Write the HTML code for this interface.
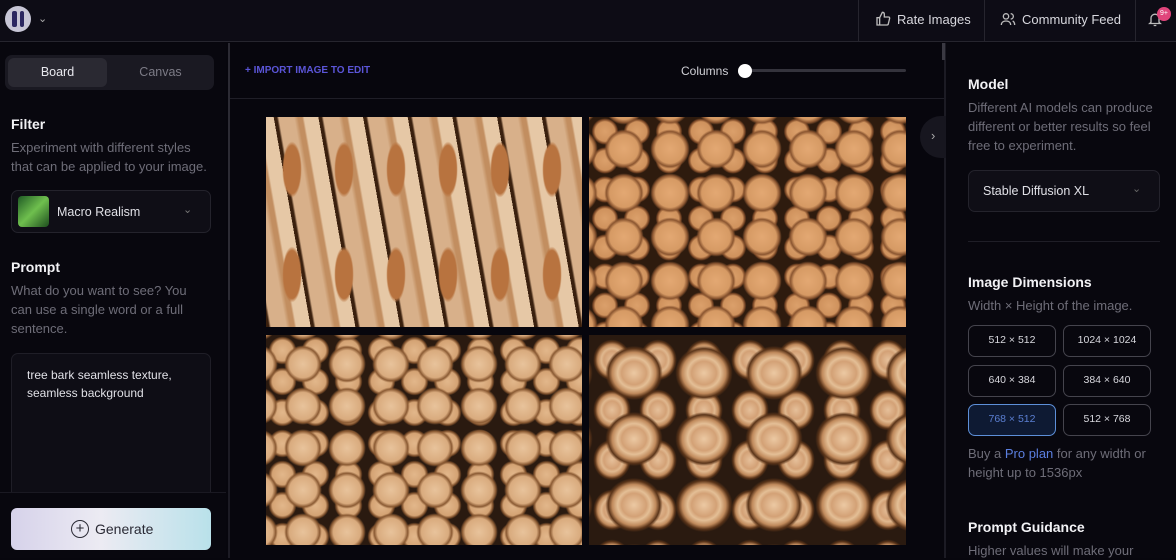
<!DOCTYPE html>
<html><head><style>
*{box-sizing:border-box;margin:0;padding:0}
body{width:1176px;height:558px;overflow:hidden;background:#07060d;font-family:"Liberation Sans",sans-serif;color:#e8e8ee;position:relative}
.abs{position:absolute}
.hdr{left:0;top:0;width:1176px;height:42px;background:#0d0c15;border-bottom:1px solid #26252e}
.sub{color:#6e6d78;font-size:13px;line-height:19px}
h3{font-size:14px;font-weight:bold;color:#f2f2f5}
.btn{border:1.5px solid #45444d;border-radius:7px;width:88px;height:32px;font-size:10.5px;text-align:center;line-height:29px;color:#d8d8de;position:absolute}
</style></head><body>
<div class="abs hdr"></div>
<div class="abs" style="left:5px;top:6px;width:26px;height:26px;border-radius:50%;background:#c7c6d6"></div>
<div class="abs" style="left:12px;top:11px;width:5px;height:16px;background:#2b2760;border-radius:2px"></div>
<div class="abs" style="left:20px;top:11px;width:4px;height:16px;background:#2b2760;border-radius:2px"></div>
<div class="abs" style="left:38px;top:12px;font-size:11px;color:#aaa">⌄</div>
<div class="abs" style="left:858px;top:0;width:1px;height:42px;background:#26252e"></div>
<div class="abs" style="left:984px;top:0;width:1px;height:42px;background:#26252e"></div>
<div class="abs" style="left:1135px;top:0;width:1px;height:42px;background:#26252e"></div>
<svg class="abs" style="left:875px;top:11px" width="16" height="16" viewBox="0 0 24 24" fill="none" stroke="#bbb" stroke-width="2"><path d="M7 10v11H3V10zM7 10l4-8c2 0 3 1 3 3v4h6a2 2 0 0 1 2 2l-2 8a2 2 0 0 1-2 2H7"/></svg>
<div class="abs" style="left:897px;top:12px;font-size:13px;color:#d8d8de">Rate Images</div>
<svg class="abs" style="left:1000px;top:11px" width="16" height="16" viewBox="0 0 24 24" fill="none" stroke="#bbb" stroke-width="2"><circle cx="9" cy="8" r="4"/><path d="M2 21c0-4 3-6 7-6s7 2 7 6M16 4a4 4 0 0 1 0 8M19 15c2 1 3 3 3 6"/></svg>
<div class="abs" style="left:1022px;top:12px;font-size:13px;color:#d8d8de">Community Feed</div>
<svg class="abs" style="left:1147px;top:11px" width="16" height="17" viewBox="0 0 24 24" fill="none" stroke="#bbb" stroke-width="2"><path d="M6 16V10a6 6 0 0 1 12 0v6l2 2H4zM10 21h4"/></svg>
<div class="abs" style="left:1157px;top:7px;width:14px;height:14px;border-radius:50%;background:#e0457b;font-size:7px;line-height:14px;text-align:center;color:#fff">9+</div>

<!-- left panel -->
<div class="abs" style="left:0;top:43px;width:226px;height:515px;background:#08070e"></div>
<div class="abs" style="left:228px;top:43px;width:2px;height:515px;background:#1c1b24"></div>
<div class="abs" style="left:228px;top:43px;width:2px;height:257px;background:#2c2b34"></div>
<div class="abs" style="left:5px;top:55px;width:209px;height:35px;background:#1a1922;border-radius:7px"></div>
<div class="abs" style="left:8px;top:58px;width:99px;height:29px;background:#2a2932;border-radius:6px;text-align:center;line-height:29px;font-size:12.5px;color:#e8e8ee">Board</div>
<div class="abs" style="left:110px;top:58px;width:101px;height:29px;text-align:center;line-height:29px;font-size:12.5px;color:#7c7b86">Canvas</div>
<h3 class="abs" style="left:11px;top:116px">Filter</h3>
<div class="abs sub" style="left:11px;top:138px;width:200px">Experiment with different styles that can be applied to your image.</div>
<div class="abs" style="left:11px;top:190px;width:200px;height:43px;border:1px solid #24232c;border-radius:7px;background:#0f0e16"></div>
<div class="abs" style="left:18px;top:196px;width:31px;height:31px;border-radius:4px;background:linear-gradient(135deg,#1f5a25,#6fbf4e 50%,#1d4d1e)"></div>
<div class="abs" style="left:57px;top:205px;font-size:12.5px;color:#e0e0e6">Macro Realism</div>
<div class="abs" style="left:183px;top:203px;font-size:11px;color:#777">⌄</div>
<h3 class="abs" style="left:11px;top:259px">Prompt</h3>
<div class="abs sub" style="left:11px;top:281px;width:200px">What do you want to see? You can use a single word or a full sentence.</div>
<div class="abs" style="left:11px;top:353px;width:200px;height:160px;border:1px solid #1f1e27;border-radius:7px;background:#0e0d15"></div>
<div class="abs" style="left:27px;top:366px;font-size:12px;line-height:18px;color:#e0e0e6">tree bark seamless texture,<br>seamless background</div>
<div class="abs" style="left:0;top:492px;width:226px;height:66px;background:#08070e;border-top:1px solid #1a1922"></div>
<div class="abs" style="left:11px;top:508px;width:200px;height:42px;border-radius:6px;background:linear-gradient(90deg,#d6d2ea,#ecebf3 45%,#b9e1ea)"></div>
<div class="abs" style="left:95px;top:521px;font-size:14px;color:#2a2a35">Generate</div>
<div class="abs" style="left:71px;top:520px;width:18px;height:18px;border:1.5px solid #2a2a35;border-radius:50%;text-align:center;line-height:15px;font-size:15px;color:#2a2a35">+</div>

<!-- center -->
<div class="abs" style="left:230px;top:98px;width:714px;height:1px;background:#1f1e27"></div>
<div class="abs" style="left:245px;top:65px;font-size:10px;font-weight:bold;color:#5b55d8">+ IMPORT IMAGE TO EDIT</div>
<div class="abs" style="left:681px;top:64px;font-size:12px;color:#d0d0d6">Columns</div>
<div class="abs" style="left:745px;top:69px;width:161px;height:3px;background:#34333c;border-radius:2px"></div>
<div class="abs" style="left:738px;top:64px;width:14px;height:14px;border-radius:50%;background:#fff"></div>
<div class="abs" style="left:944px;top:43px;width:2px;height:515px;background:#1c1b24"></div>
<div class="abs" style="left:942px;top:43px;width:3px;height:17px;background:#3a3942"></div>
<div class="abs" style="left:920px;top:116px;width:30px;height:42px;border-radius:21px 0 0 21px;background:#17161f;color:#aaa;font-size:13px;line-height:40px;padding-left:11px">›</div>

<div class="abs" style="left:266px;top:117px;width:316px;height:210px;background:
radial-gradient(ellipse 14px 40px at 50% 50%,#b8733f 0 60%,transparent 70%) 0 0/52px 105px,
repeating-linear-gradient(80deg,#3a200e 0 3px,#d8b08a 5px 20px,#c28e60 24px 28px,#e6c8a6 30px 44px),#c89a6e;"></div>
<div class="abs" style="left:589px;top:117px;width:317px;height:210px;background:
radial-gradient(circle,#e3a873 0,#d69a64 45%,#8a5530 55%,transparent 62%) 12px 10px/46px 44px,
radial-gradient(circle,#dba06b 0,#cf925d 45%,#7a4726 55%,transparent 62%) 0 0/32px 29px,#2e1b0e;"></div>
<div class="abs" style="left:266px;top:335px;width:316px;height:210px;background:
radial-gradient(circle,#e8c39b 0,#d9ab7e 45%,#8a5a33 55%,transparent 62%) 15px 8px/44px 42px,
radial-gradient(circle,#e2b78b 0,#d4a374 45%,#7a4d2a 55%,transparent 62%) 0 0/33px 31px,#2a1a10;"></div>
<div class="abs" style="left:589px;top:335px;width:317px;height:210px;background:
radial-gradient(ellipse,#ecc9a3 0,#d3a176 25%,#e4bf96 33%,#c08a5c 44%,#5a3419 52%,transparent 58%) 10px 5px/70px 66px,
radial-gradient(ellipse,#e6c09a 0,#d3a176 25%,#e0b88f 33%,#c08a5c 44%,#5a3419 52%,transparent 58%) 0 0/46px 50px,#2a1a10;"></div>

<!-- right -->
<div class="abs" style="left:946px;top:43px;width:230px;height:515px;background:#08070e"></div>
<h3 class="abs" style="left:968px;top:76px">Model</h3>
<div class="abs sub" style="left:968px;top:98px;width:200px">Different AI models can produce different or better results so feel free to experiment.</div>
<div class="abs" style="left:968px;top:170px;width:192px;height:42px;border:1px solid #24232c;border-radius:7px;background:#0f0e16"></div>
<div class="abs" style="left:983px;top:184px;font-size:12.5px;color:#e0e0e6">Stable Diffusion XL</div>
<div class="abs" style="left:1132px;top:182px;font-size:11px;color:#666">⌄</div>
<div class="abs" style="left:968px;top:241px;width:192px;height:1px;background:#1f1e27"></div>
<h3 class="abs" style="left:968px;top:274px">Image Dimensions</h3>
<div class="abs sub" style="left:968px;top:296px">Width × Height of the image.</div>
<div class="btn" style="left:968px;top:325px">512 × 512</div>
<div class="btn" style="left:1063px;top:325px">1024 × 1024</div>
<div class="btn" style="left:968px;top:365px">640 × 384</div>
<div class="btn" style="left:1063px;top:365px">384 × 640</div>
<div class="btn" style="left:968px;top:404px;border-color:#5d8fd8;background:#0e1a33;color:#5b7fd2">768 × 512</div>
<div class="btn" style="left:1063px;top:404px">512 × 768</div>
<div class="abs sub" style="left:968px;top:444px;width:200px">Buy a <span style="color:#5b7fe0">Pro plan</span> for any width or height up to 1536px</div>
<h3 class="abs" style="left:968px;top:519px">Prompt Guidance</h3>
<div class="abs sub" style="left:968px;top:541px">Higher values will make your</div>
</body></html>
